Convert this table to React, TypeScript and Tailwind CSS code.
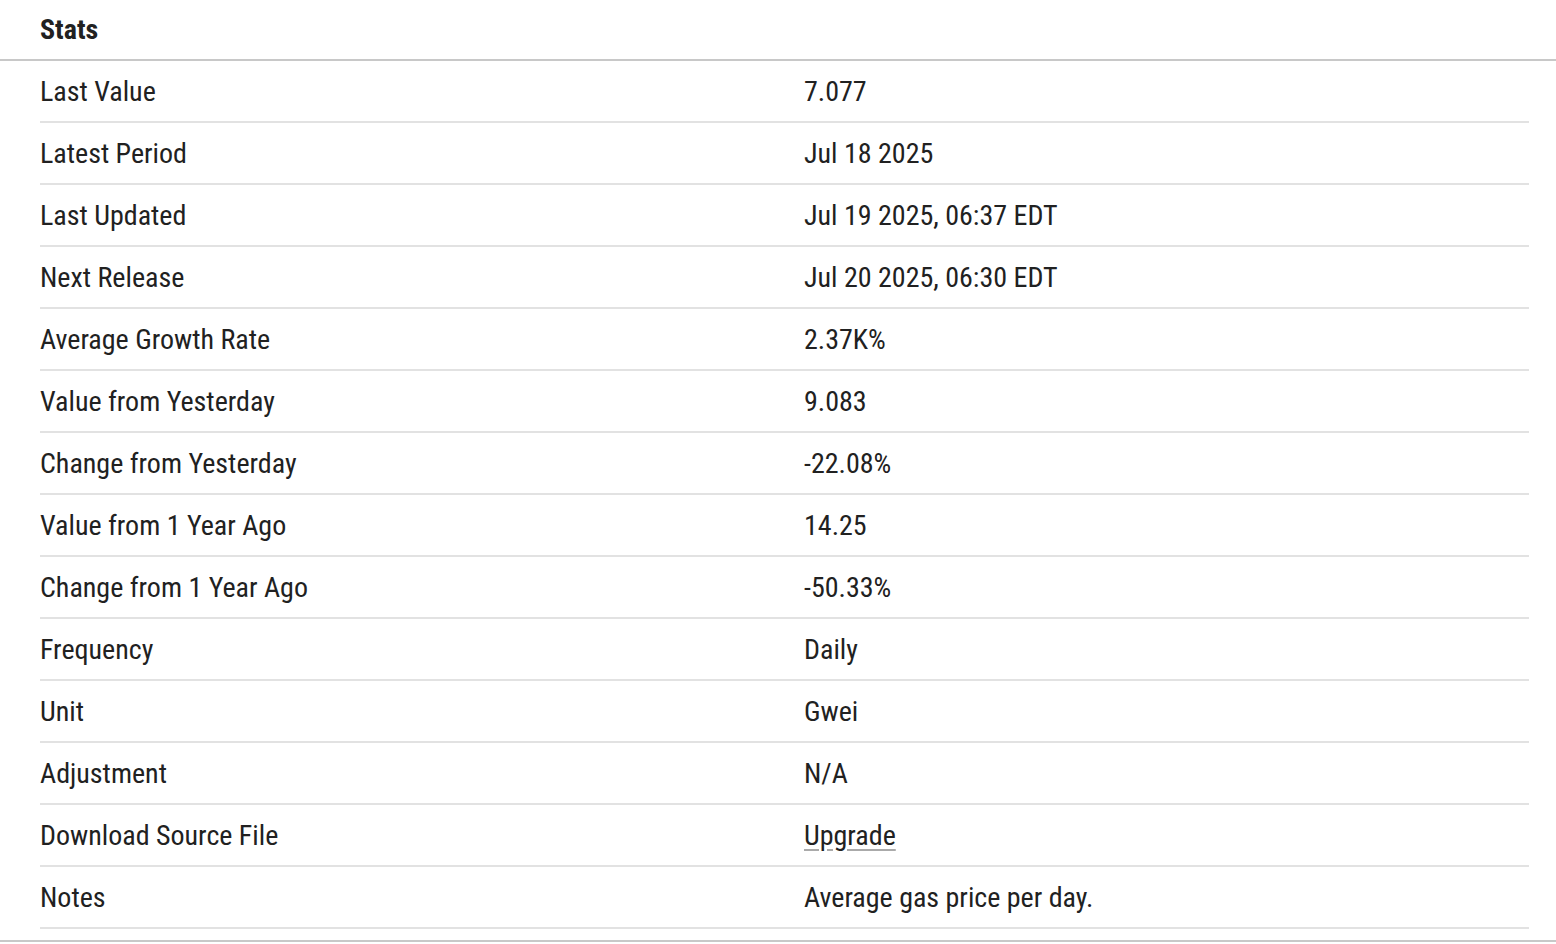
import React from "react";

const rows: [string, string][] = [
  ["Last Value", "7.077"],
  ["Latest Period", "Jul 18 2025"],
  ["Last Updated", "Jul 19 2025, 06:37 EDT"],
  ["Next Release", "Jul 20 2025, 06:30 EDT"],
  ["Average Growth Rate", "2.37K%"],
  ["Value from Yesterday", "9.083"],
  ["Change from Yesterday", "-22.08%"],
  ["Value from 1 Year Ago", "14.25"],
  ["Change from 1 Year Ago", "-50.33%"],
  ["Frequency", "Daily"],
  ["Unit", "Gwei"],
  ["Adjustment", "N/A"],
  ["Download Source File", "Upgrade"],
  ["Notes", "Average gas price per day."],
];

export default function App() {
  return (
    <div
      className="w-[1556px] h-[944px] bg-white text-[#212121] overflow-hidden"
      style={{ fontFamily: "Roboto, 'Liberation Sans', sans-serif", fontStretch: "condensed" }}
    >
      <div className="h-[61px] border-b-2 border-[#c8c8c8] flex items-center pl-[40px]">
        <span className="text-[28px] leading-[32px] font-bold">Stats</span>
      </div>
      <div className="pl-[40px] pr-[27px] pb-[11px] border-b-2 border-[#c8c8c8]">
        {rows.map(([k, v]) => (
          <div
            key={k}
            className="grid grid-cols-[764px_1fr] h-[62px] pt-[2px] items-center border-b-2 border-[#e2e2e2] text-[28px] leading-[32px]"
          >
            <span>{k}</span>
            <span>
              {v === "Upgrade" ? (
                <span className="underline decoration-[#aaa] underline-offset-4">{v}</span>
              ) : (
                v
              )}
            </span>
          </div>
        ))}
      </div>
    </div>
  );
}
